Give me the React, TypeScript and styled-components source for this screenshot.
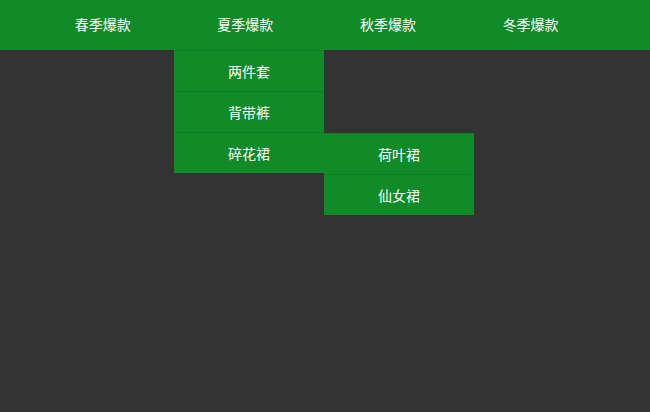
import React from "react";
import styled, { createGlobalStyle } from "styled-components";

const Global = createGlobalStyle`
  html, body { margin: 0; padding: 0; background: #333333; }
  body { font-family: "Microsoft YaHei", "Noto Sans CJK SC", sans-serif; width: 650px; height: 412px; overflow: hidden; }
  #root { min-height: 412px; background: #333333; }
  ul { list-style: none; margin: 0; padding: 0; }
`;

const Bar = styled.nav`
  height: 50px;
  background: #118a28;
`;

const TopList = styled.ul`
  display: flex;
  padding-left: 31.33px !important;
  height: 50px;
`;

const TopItem = styled.li`
  position: relative;
  box-sizing: border-box;
  width: 142.67px;
  height: 50px;
  padding-bottom: 2px;
  display: flex;
  align-items: center;
  justify-content: center;
  color: #ffffff;
  font-size: 14px;
  line-height: 1;
`;

const Dropdown = styled.ul<{ $side?: boolean }>`
  position: absolute;
  left: ${(p) => (p.$side ? "100%" : "0")};
  top: ${(p) => (p.$side ? "0" : "100%")};
  width: 150px;
  z-index: 2;
`;

const DropItem = styled.li`
  position: relative;
  box-sizing: border-box;
  height: 41px;
  padding-bottom: 1px;
  border-top: 1px solid #0d7d21;
  background: #118a28;
  color: #ffffff;
  font-size: 14px;
  line-height: 1;
  display: flex;
  align-items: center;
  justify-content: center;
`;

export default function App() {
  return (
    <>
      <Global />
      <Bar>
        <TopList>
          <TopItem>春季爆款</TopItem>
          <TopItem>
            夏季爆款
            <Dropdown>
              <DropItem>两件套</DropItem>
              <DropItem>背带裤</DropItem>
              <DropItem>
                碎花裙
                <Dropdown $side>
                  <DropItem>荷叶裙</DropItem>
                  <DropItem>仙女裙</DropItem>
                </Dropdown>
              </DropItem>
            </Dropdown>
          </TopItem>
          <TopItem>秋季爆款</TopItem>
          <TopItem>冬季爆款</TopItem>
        </TopList>
      </Bar>
    </>
  );
}
